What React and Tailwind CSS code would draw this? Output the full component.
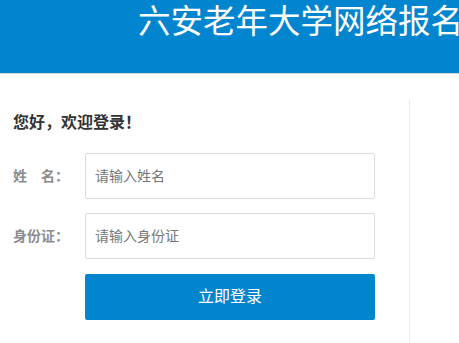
export default function App() {
  const font = { fontFamily: '"Liberation Sans", "Noto Sans CJK SC", sans-serif' };

  return (
    <div className="min-h-screen bg-white" style={font}>
      {/* Top banner */}
      <header className="h-[73px] bg-[#0285cf] shadow-[0_1px_1px_rgba(0,0,0,0.15)] overflow-hidden whitespace-nowrap">
        <h1 className="pl-[138px] pt-[3px] text-[32.5px] leading-[38px] text-white font-normal">
          六安老年大学网络报名
        </h1>
      </header>

      <div className="mt-[27px] flex">
        {/* Login panel */}
        <section className="w-[410px] shrink-0 border-r border-[#ebebeb] pl-[13px] pt-[11px] pb-[40px]">
          <p className="text-[16px] leading-[24px] font-bold text-[#333]">您好，欢迎登录！</p>

          <div className="mt-[18px] flex flex-col gap-[14px]">
            <div className="flex items-center">
              <label className="w-[72px] text-[14px] font-bold text-[#8c8c8c] whitespace-pre">姓　名：</label>
              <input
                type="text"
                placeholder="请输入姓名"
                className="w-[290px] h-[46px] rounded-[2px] border border-[#dcdcdc] px-[9px] text-[14px] text-[#333] placeholder:text-[#777] outline-none"
              />
            </div>
            <div className="flex items-center">
              <label className="w-[72px] text-[14px] font-bold text-[#8c8c8c]">身份证：</label>
              <input
                type="text"
                placeholder="请输入身份证"
                className="w-[290px] h-[46px] rounded-[2px] border border-[#dcdcdc] px-[9px] text-[14px] text-[#333] placeholder:text-[#777] outline-none"
              />
            </div>
            <div className="flex pl-[72px] pt-px">
              <button
                type="button"
                className="w-[290px] h-[46px] rounded-[2px] bg-[#0285cf] text-[16px] text-white"
              >
                立即登录
              </button>
            </div>
          </div>
        </section>

        <div className="flex-1" />
      </div>
    </div>
  );
}
